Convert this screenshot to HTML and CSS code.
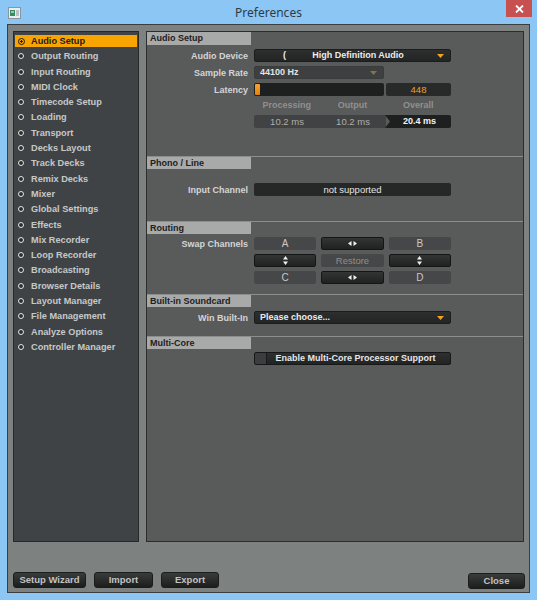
FILE: index.html
```html
<!DOCTYPE html>
<html>
<head>
<meta charset="utf-8">
<title>Preferences</title>
<link rel="stylesheet" href="styles.css">
</head>
<body>
<div class="window">
  <div class="titlebar">
    <div class="tb-left">
      <svg class="app-icon" width="13" height="12" viewBox="0 0 13 12">
        <rect x="0.5" y="0.5" width="12" height="11" fill="#e9eef2" stroke="#8a96a0"/>
        <rect x="2" y="3" width="5" height="6" fill="#3d8a5a"/>
        <rect x="3" y="4" width="3" height="2" fill="#7fc8e8"/>
        <rect x="8" y="3" width="3" height="6" fill="#b8c2ca"/>
      </svg>
    </div>
    <div class="tb-title">Preferences</div>
    <div class="tb-right">
      <div class="close-x">
        <svg width="9" height="8" viewBox="0 0 9 8"><path d="M1 0.5 L8 7.5 M8 0.5 L1 7.5" stroke="#fff" stroke-width="1.8"/></svg>
      </div>
    </div>
  </div>
  <div class="client">
    <div class="main-row">
      <ul class="sidebar">
        <li class="item active"><span class="dot"></span>Audio Setup</li>
        <li class="item"><span class="dot"></span>Output Routing</li>
        <li class="item"><span class="dot"></span>Input Routing</li>
        <li class="item"><span class="dot"></span>MIDI Clock</li>
        <li class="item"><span class="dot"></span>Timecode Setup</li>
        <li class="item"><span class="dot"></span>Loading</li>
        <li class="item"><span class="dot"></span>Transport</li>
        <li class="item"><span class="dot"></span>Decks Layout</li>
        <li class="item"><span class="dot"></span>Track Decks</li>
        <li class="item"><span class="dot"></span>Remix Decks</li>
        <li class="item"><span class="dot"></span>Mixer</li>
        <li class="item"><span class="dot"></span>Global Settings</li>
        <li class="item"><span class="dot"></span>Effects</li>
        <li class="item"><span class="dot"></span>Mix Recorder</li>
        <li class="item"><span class="dot"></span>Loop Recorder</li>
        <li class="item"><span class="dot"></span>Broadcasting</li>
        <li class="item"><span class="dot"></span>Browser Details</li>
        <li class="item"><span class="dot"></span>Layout Manager</li>
        <li class="item"><span class="dot"></span>File Management</li>
        <li class="item"><span class="dot"></span>Analyze Options</li>
        <li class="item"><span class="dot"></span>Controller Manager</li>
      </ul>
      <div class="panel">
        <section class="sec sec-audio">
          <div class="sec-head">Audio Setup</div>
          <div class="row r-first">
            <span class="lbl">Audio Device</span>
            <div class="ctrl dd">
              <span class="dd-paren">(</span>
              <span class="dd-text">High Definition Audio</span>
              <svg class="arrow" width="7" height="4" viewBox="0 0 7 4"><path d="M0 0 H7 L3.5 4 Z" fill="#f4a21f"/></svg>
            </div>
          </div>
          <div class="row r-gap">
            <span class="lbl">Sample Rate</span>
            <div class="ctrl dd dd-dis dd-half">
              <span class="dd-val">44100 Hz</span>
              <svg class="arrow" width="7" height="4" viewBox="0 0 7 4"><path d="M0 0 H7 L3.5 4 Z" fill="#8c6f45"/></svg>
            </div>
          </div>
          <div class="row r-gap">
            <span class="lbl">Latency</span>
            <div class="ctrl latency">
              <div class="slider"><span class="thumb"></span></div>
              <div class="lat-val">448</div>
            </div>
          </div>
          <div class="row col-heads">
            <span class="lbl"></span>
            <div class="ctrl cols3">
              <span>Processing</span><span>Output</span><span>Overall</span>
            </div>
          </div>
          <div class="row r-vals">
            <span class="lbl"></span>
            <div class="ctrl vals">
              <div class="vals-light"><span>10.2 ms</span><span>10.2 ms</span></div>
              <div class="vals-dark">20.4 ms</div>
            </div>
          </div>
        </section>
        <section class="sec sec-phono">
          <div class="sec-head">Phono / Line</div>
          <div class="row r-phono">
            <span class="lbl">Input Channel</span>
            <div class="ctrl box">not supported</div>
          </div>
        </section>
        <section class="sec sec-routing">
          <div class="sec-head">Routing</div>
          <div class="row r-rt1">
            <span class="lbl">Swap Channels</span>
            <div class="ctrl grid3">
              <div class="btn flat">A</div>
              <div class="btn dark"><svg width="9" height="5" viewBox="0 0 9 5"><path d="M0 2.5 L3.5 0 V5 Z M9 2.5 L5.5 0 V5 Z" fill="#f2f2f2"/></svg></div>
              <div class="btn flat">B</div>
            </div>
          </div>
          <div class="row r-rt">
            <span class="lbl"></span>
            <div class="ctrl grid3">
              <div class="btn dark"><svg width="5" height="9" viewBox="0 0 5 9"><path d="M2.5 0 L5 3.5 H0 Z M2.5 9 L5 5.5 H0 Z" fill="#f2f2f2"/></svg></div>
              <div class="btn flat dim">Restore</div>
              <div class="btn dark"><svg width="5" height="9" viewBox="0 0 5 9"><path d="M2.5 0 L5 3.5 H0 Z M2.5 9 L5 5.5 H0 Z" fill="#f2f2f2"/></svg></div>
            </div>
          </div>
          <div class="row r-rt">
            <span class="lbl"></span>
            <div class="ctrl grid3">
              <div class="btn flat">C</div>
              <div class="btn dark"><svg width="9" height="5" viewBox="0 0 9 5"><path d="M0 2.5 L3.5 0 V5 Z M9 2.5 L5.5 0 V5 Z" fill="#f2f2f2"/></svg></div>
              <div class="btn flat">D</div>
            </div>
          </div>
        </section>
        <section class="sec sec-builtin">
          <div class="sec-head">Built-in Soundcard</div>
          <div class="row r-first">
            <span class="lbl">Win Built-In</span>
            <div class="ctrl dd">
              <span class="dd-val">Please choose...</span>
              <svg class="arrow" width="7" height="4" viewBox="0 0 7 4"><path d="M0 0 H7 L3.5 4 Z" fill="#f4a21f"/></svg>
            </div>
          </div>
        </section>
        <section class="sec sec-multi">
          <div class="sec-head">Multi-Core</div>
          <div class="row r-multi">
            <span class="lbl"></span>
            <div class="ctrl check">
              <span class="check-box"></span>
              <span class="check-text">Enable Multi-Core Processor Support</span>
            </div>
          </div>
        </section>
      </div>
    </div>
    <div class="bottom-bar">
      <div class="pbtn w-wizard">Setup Wizard</div>
      <div class="pbtn w-import">Import</div>
      <div class="pbtn w-export">Export</div>
      <div class="pbtn w-close">Close</div>
    </div>
  </div>
</div>
</body>
</html>
```

FILE: styles.css
```css
* { box-sizing: border-box; }
html, body { margin: 0; padding: 0; }
body {
  background: #8cc6f5;
  font-family: "Liberation Sans", Arial, sans-serif;
  font-size: 9px;
  font-weight: bold;
}
.window {
  width: 537px;
  height: 600px;
  background: #8cc6f5;
  display: flex;
  flex-direction: column;
}
.titlebar {
  height: 24px;
  display: grid;
  grid-template-columns: 1fr auto 1fr;
  align-items: start;
}
.tb-left { padding: 7px 0 0 8px; }
.app-icon { display: block; }
.tb-title {
  font-family: "Noto Sans", "Open Sans", sans-serif;
  font-weight: normal;
  font-size: 12px;
  color: #2e3a46;
  line-height: 25px;
}
.tb-right { display: flex; justify-content: flex-end; padding-right: 5px; }
.close-x {
  width: 26px;
  height: 17px;
  background: #c75050;
  display: flex;
  align-items: center;
  justify-content: center;
}
.close-x svg { display: block; }

.client {
  margin: 0 7px;
  height: 569px;
  background: #7d817f;
  border: 1px solid #3a3e40;
  padding: 6px 4px 0 5px;
  display: flex;
  flex-direction: column;
}
.main-row {
  display: flex;
  gap: 7px;
  height: 511px;
}
.sidebar {
  list-style: none;
  margin: 0;
  padding: 3px 1px 0 1px;
  width: 126px;
  background: #404345;
  border: 1px solid #26292a;
}
.item {
  height: 12px;
  line-height: 12px;
  margin-bottom: 3.3px;
  color: #c6c8c8;
  display: flex;
  align-items: center;
  padding-left: 3px;
  white-space: nowrap;
  font-size: 9.2px;
}
.item .dot {
  width: 6px;
  height: 6px;
  border-radius: 50%;
  border: 1.6px solid #e6e6e6;
  background: #2c2e2f;
  margin-right: 7px;
  flex: none;
}
.item.active {
  background: #f8a502;
  color: #1c1c1c;
}
.item.active .dot {
  border-color: #1e1e1e;
  background: radial-gradient(circle, #1e1e1e 0 1px, #f8a502 1.2px);
  width: 7px;
  height: 7px;
  margin-right: 6px;
}

.panel {
  width: 378px;
  background: #595a5a;
  border: 1px solid #2c2d2d;
  display: flex;
  flex-direction: column;
}
.sec { border-top: 1px solid #8c8d8d; }
.sec-audio { border-top: none; height: 124px; }
.sec-phono { height: 65px; }
.sec-routing { height: 73px; }
.sec-builtin { height: 42px; }
.sec-head {
  width: 104px;
  height: 12px;
  line-height: 12px;
  background: #a8aaaa;
  color: #1f2020;
  padding-left: 3px;
}
.sec-audio .sec-head { height: 13px; line-height: 13px; }
.row {
  display: flex;
  align-items: center;
  height: 13px;
}
.lbl {
  width: 101px;
  margin-right: 6px;
  text-align: right;
  color: #d4d5d5;
  white-space: nowrap;
  flex: none;
}
.ctrl {
  width: 197px;
  height: 13px;
  flex: none;
}
.r-first { margin-top: 4px; }
.r-gap { margin-top: 4px; }
.dd {
  background: linear-gradient(#2d2e2e, #232424);
  border: 1px solid #1b1c1c;
  border-radius: 2px;
  display: flex;
  align-items: center;
  color: #ececec;
  padding: 0 6px 0 5px;
  line-height: 11px;
}
.dd .arrow { margin-left: auto; flex: none; }
.dd-paren { padding-left: 23px; }
.dd-text { margin-left: auto; margin-right: 7px; }
.dd-dis {
  background: #3e3f40;
  border-color: #3a3b3b;
  color: #e4e4e4;
}
.dd-half { width: 130px; }
.latency { display: flex; gap: 2px; }
.slider {
  width: 130px;
  height: 13px;
  background: #1e1f1f;
  border-radius: 2px;
  padding: 1px 0 0 1px;
}
.thumb {
  display: block;
  width: 5px;
  height: 11px;
  border-radius: 1px;
  background: linear-gradient(#f6a530, #e2820c);
}
.lat-val {
  flex: 1;
  background: #282929;
  border-radius: 2px;
  color: #f0a020;
  text-align: center;
  line-height: 13px;
  font-weight: normal;
  font-size: 9.5px;
}
.col-heads { margin-top: 3px; height: 13px; }
.cols3 {
  display: grid;
  grid-template-columns: 1fr 1fr 1fr;
  text-align: center;
  color: #8f9191;
  line-height: 13px;
}
.r-vals { margin-top: 3px; }
.vals { display: flex; }
.vals-light {
  width: 132px;
  background: #414243;
  border-radius: 2px 0 0 2px;
  display: grid;
  grid-template-columns: 1fr 1fr;
  text-align: center;
  color: #aeafaf;
  line-height: 13px;
  font-weight: normal;
  font-size: 9.5px;
}
.vals-dark {
  flex: 1;
  margin-left: -1px;
  background: #1e1f1f;
  border-radius: 0 2px 2px 0;
  clip-path: polygon(0 0, 100% 0, 100% 100%, 0 100%, 5px 50%);
  color: #f4f4f4;
  text-align: center;
  line-height: 13px;
  padding-left: 3px;
}
.r-phono { margin-top: 14px; }
.box {
  background: #262727;
  border-radius: 2px;
  color: #e4e4e4;
  text-align: center;
  line-height: 13px;
  font-weight: normal;
  font-size: 9.5px;
}
.r-rt1 { margin-top: 3px; }
.r-rt { margin-top: 4px; }
.grid3 {
  display: grid;
  grid-template-columns: 1fr 1fr 1fr;
  gap: 5px;
}
.btn {
  height: 13px;
  border-radius: 2px;
  display: flex;
  align-items: center;
  justify-content: center;
}
.btn.flat {
  background: #464748;
  color: #c8c9c9;
  font-weight: normal;
  font-size: 10px;
}
.btn.flat.dim { color: #8f9090; font-size: 9.5px; }
.btn.dark {
  background: linear-gradient(#333434, #202121);
  border: 1px solid #141515;
}
.btn svg { display: block; }
.r-multi { margin-top: 3px; }
.check {
  display: flex;
  background: linear-gradient(#2e2f2f, #222323);
  border: 1px solid #161717;
  border-radius: 2px;
  color: #e6e6e6;
}
.check-box {
  width: 12px;
  height: 11px;
  background: #3c3d3e;
  border-right: 1px solid #1a1b1b;
  border-radius: 1px 0 0 1px;
  flex: none;
}
.check-text {
  flex: 1;
  text-align: center;
  line-height: 11px;
  padding-right: 6px;
}

.bottom-bar {
  margin-top: 30px;
  display: flex;
  align-items: flex-start;
  gap: 8px;
}
.pbtn {
  height: 16px;
  line-height: 14px;
  background: linear-gradient(#3a3b3b, #1c1d1d);
  border: 1px solid #1b1c1c;
  border-radius: 3px;
  color: #c2c3c3;
  text-align: center;
  font-size: 9.5px;
}
.w-wizard { width: 73px; }
.w-import { width: 59px; }
.w-export { width: 58px; }
.w-close { width: 57px; margin-left: auto; margin-top: 1px; }
```
